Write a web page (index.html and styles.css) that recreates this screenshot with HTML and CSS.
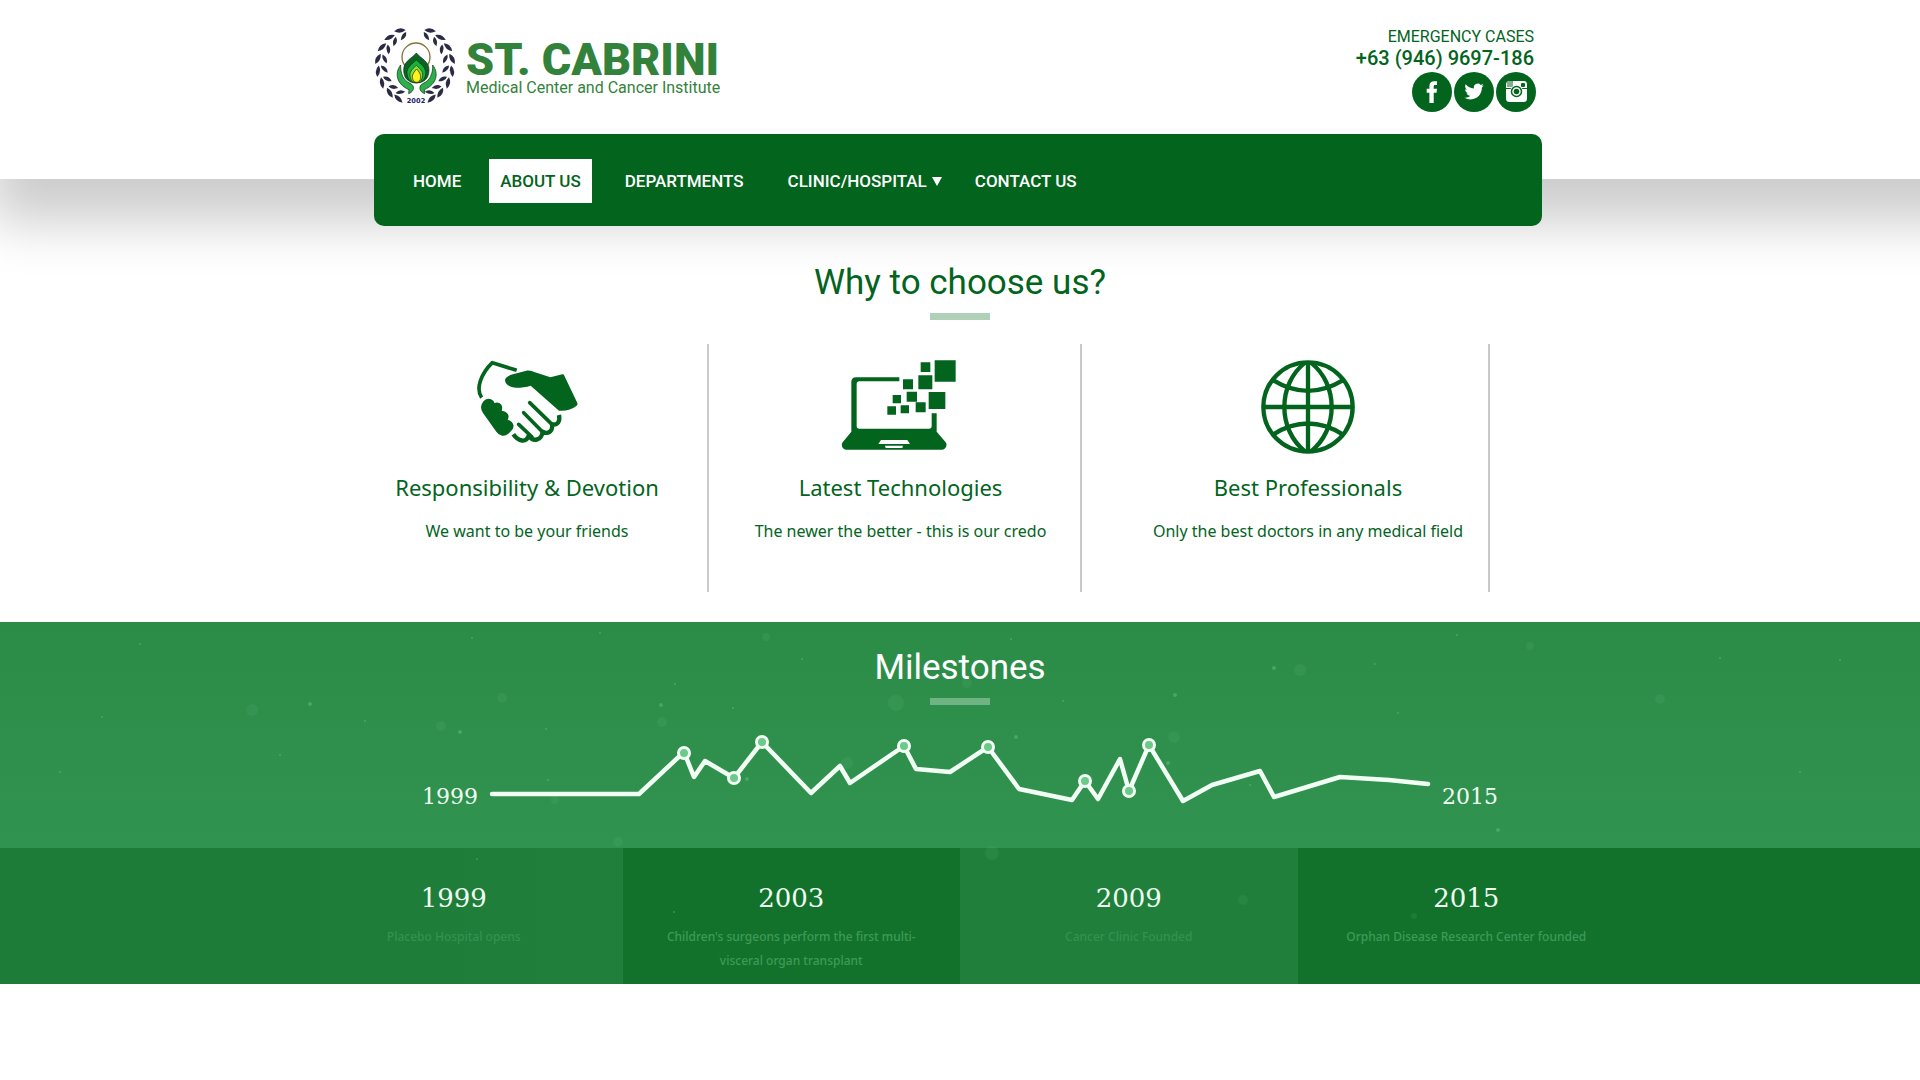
FILE: index.html
```html
<!DOCTYPE html>
<html lang="en">
<head>
<meta charset="utf-8">
<meta name="viewport" content="width=device-width, initial-scale=1">
<title>St. Cabrini Medical Center and Cancer Institute</title>
<link rel="stylesheet" href="styles.css">
</head>
<body>
<header class="site-header">
  <div class="header-inner">
    <a class="brand" href="#">
      <svg class="brand-emblem" viewBox="42 47 246 234" aria-hidden="true">
        <defs>
          <g id="sprig" fill="#2b2b45">
            <path d="M-17 -107 Q-6 -125 16 -118 Q3 -101 -17 -107Z"/>
            <path d="M-16 -101 Q-1 -103 9 -85 Q-10 -82 -16 -101Z"/>
          </g>
          <g id="branch">
            <use href="#sprig" transform="rotate(24)"/>
            <use href="#sprig" transform="rotate(43)"/>
            <use href="#sprig" transform="rotate(62)"/>
            <use href="#sprig" transform="rotate(81)"/>
            <use href="#sprig" transform="rotate(100)"/>
            <use href="#sprig" transform="rotate(119)"/>
            <use href="#sprig" transform="rotate(138)"/>
            <use href="#sprig" transform="rotate(154)"/>
          </g>
          <path id="hand" d="M122 164 C103 188 109 222 147 238 L146 250 C163 244 166 226 150 219 C130 210 121 190 122 164Z"/>
        </defs>
        <use href="#branch" transform="translate(165 164)"/>
        <use href="#branch" transform="translate(165 164) scale(-1 1)"/>
        <circle cx="168" cy="140" r="42" fill="none" stroke="#84733a" stroke-width="4"/>
        <g stroke="#0a2a12" stroke-width="2">
          <use href="#hand" fill="#2cb04c"/>
          <use href="#hand" fill="#2cb04c" transform="translate(340 0) scale(-1 1)"/>
          <path d="M169 128 C182 144 208 153 207 180 C206 206 192 217 169 218 C146 217 132 206 131 180 C130 153 156 144 169 128Z" fill="#0c6424"/>
          <path d="M169 149 C180 160 199 170 197 190 C195 210 184 217 169 217 C154 217 143 210 141 190 C139 170 158 160 169 149Z" fill="#16b43c"/>
          <path d="M169 165 C177 173 190 182 188 196 C186 211 180 217 169 217 C158 217 152 211 150 196 C148 182 161 173 169 165Z" fill="#92dc32"/>
          <path d="M170 176 C177 184 183 192 182 201 C181 211 177 216 170 216 C163 216 158 211 157 201 C156 192 163 184 170 176Z" fill="#fff01e"/>
        </g>
        <text x="168" y="277" text-anchor="middle" class="emblem-year">2002</text>
      </svg>
      <span class="brand-text">
        <span class="brand-name">ST. CABRINI</span>
        <span class="brand-tag">Medical Center and Cancer Institute</span>
      </span>
    </a>
    <div class="contact">
      <span class="contact-label">EMERGENCY CASES</span>
      <a class="contact-phone" href="tel:+639469697186">+63 (946) 9697-186</a>
      <div class="social">
        <a href="#" aria-label="Facebook"><svg viewBox="0 0 40 40"><path d="M17.400 31V20.800H14.700V16.800H17.400V14.200C17.400 10.800 19.200 9.200 22.200 9.200H25V13.100H23.200C22.200 13.100 21.700 13.500 21.700 14.600V16.800H25L24.500 20.800H21.700V31Z" fill="#fff"/></svg></a>
        <a href="#" aria-label="Twitter"><svg viewBox="0 0 40 40"><path transform="translate(10.400 9.800) scale(.81)" fill="#fff" d="M23.950 4.570a10 10 0 0 1-2.820.780 4.960 4.960 0 0 0 2.160-2.720c-.950.550-2 .950-3.130 1.180a4.920 4.920 0 0 0-8.380 4.480C7.690 8.090 4.070 6.130 1.640 3.160a4.820 4.820 0 0 0-.670 2.480c0 1.710.870 3.210 2.190 4.100a4.900 4.900 0 0 1-2.230-.620v.060a4.920 4.920 0 0 0 3.950 4.830 5 5 0 0 1-2.210.080 4.940 4.940 0 0 0 4.600 3.420A9.870 9.870 0 0 1 0 19.540a14 14 0 0 0 7.550 2.210c9.050 0 14-7.500 14-13.980 0-.210 0-.420-.020-.630a9.940 9.940 0 0 0 2.460-2.550z"/></svg></a>
        <a href="#" aria-label="Instagram"><svg viewBox="0 0 40 40"><rect x="10" y="9" width="21" height="21" rx="3.500" fill="#fff"/><path d="M12 9.500V15M14 9V15M16 9V15" stroke="#03641d" stroke-width="1"/><rect x="25" y="11" width="4" height="4" rx="1" fill="#03641d"/><path d="M10 16.500H15M26 16.500H31" stroke="#03641d"/><circle cx="20.500" cy="19.500" r="6.500" fill="#fff"/><circle cx="20.500" cy="19.500" r="5" fill="none" stroke="#03641d" stroke-width="1.500"/><circle cx="20.500" cy="19.500" r="2.800" fill="#03641d"/></svg></a>
      </div>
    </div>
  </div>
</header>

<div class="nav-bar">
  <nav class="main-nav" aria-label="Main">
    <ul>
      <li><a class="nav-link nav-link--first" href="#">HOME</a></li>
      <li><a class="nav-link nav-link--active" href="#" aria-current="page">ABOUT US</a></li>
      <li><a class="nav-link" href="#">DEPARTMENTS</a></li>
      <li><a class="nav-link nav-link--menu" href="#">CLINIC/HOSPITAL<svg class="caret" viewBox="0 0 10 10" aria-hidden="true"><path d="M0 1H10L5 10Z" fill="#fff"/></svg></a></li>
      <li><a class="nav-link" href="#">CONTACT US</a></li>
    </ul>
  </nav>
</div>

<main>
  <section class="why">
    <h2 class="section-title">Why to choose us?</h2>
    <div class="features">
      <article class="feature">
        <div class="feature-icon">
          <svg class="icon-hands" viewBox="289 91 306 252" aria-hidden="true" fill="#03641d">
            <path d="M306 204 C287 177 304 132 338 99 L411 122" fill="none" stroke="#03641d" stroke-width="11" stroke-linejoin="round"/>
            <path d="M376 151 C378 143 388 137 400 134 L440 123 C450 121 458 124 466 128 L512 143 L548 134 Q552 133 554 138 L593 220 Q595 225 590 229 Q570 245 538 243 L453 168 C440 172 425 174 410 174 C392 174 376 164 376 151Z"/>
            <path d="M304 232 Q304 224 312 214 Q326 200 342 214 Q342 219 345 220 Q356 215 364 224 Q370 233 366 243 Q380 244 386 256 Q388 264 384 270 Q399 275 402 288 Q402 298 392 306 Q378 323 364 317 Q356 314 350 306 L310 250 Q304 242 304 232Z"/>
            <g fill="none" stroke="#03641d" stroke-width="11" stroke-linecap="round">
              <path d="M450 219 L517 284"/><path d="M432 249 L488 306"/><path d="M417 284 L457 322"/>
            </g>
            <path d="M401 314 C416 336 440 340 447 318 C462 340 486 330 489 306 C504 315 520 306 517 284 C534 287 542 275 538 256" fill="none" stroke="#03641d" stroke-width="13" stroke-linejoin="round"/>
          </svg>
        </div>
        <h3>Responsibility &amp; Devotion</h3>
        <p>We want to be your friends</p>
      </article>
      <article class="feature">
        <div class="feature-icon">
          <svg class="icon-laptop" viewBox="361 86 348 270" aria-hidden="true" fill="#03641d">
            <path d="M536 138 V150 H416 Q408 150 408 158 V284 Q408 292 416 292 H625 Q633 292 633 284 V246 H648 V301 L675 333 Q680 339 677 345 L674 350 Q671 355 664 355 H377 Q370 355 366 349 L364 345 Q361 339 366 333 L392 301 V152 Q392 138 406 138Z"/>
            <path d="M481 326 H560 L568 338 H473ZM493 343 H547 L545 350 H495Z" fill="#fff"/>
            <path d="M600 93H629V122H600ZM642 87H705V151H642ZM547 144H577V174H547ZM593 132H635V174H593ZM558 181H589V211H558ZM516 191H541V216H516ZM624 182H674V233H624ZM500 225H526V250H500ZM540 222H565V246H540ZM585 213H615V243H585Z"/>
          </svg>
        </div>
        <h3>Latest Technologies</h3>
        <p>The newer the better - this is our credo</p>
      </article>
      <article class="feature">
        <div class="feature-icon">
          <svg class="icon-globe" viewBox="423 92 282 282" aria-hidden="true" fill="none" stroke="#03641d" stroke-width="13">
            <circle cx="564" cy="233" r="134"/>
            <path d="M564 99V367M430 233H698"/>
            <path d="M556 99C472 165 472 301 556 367M572 99C656 165 656 301 572 367"/>
            <path d="M460 153Q564 216 668 153M460 315Q564 250 668 315"/>
          </svg>
        </div>
        <h3>Best Professionals</h3>
        <p>Only the best doctors in any medical field</p>
      </article>
    </div>
  </section>

  <section class="milestones">
    <svg class="specks" viewBox="0 0 1920 362" preserveAspectRatio="xMidYMin slice" aria-hidden="true" fill="#6fbf83">
      <g opacity=".12">
        <circle cx="252" cy="88" r="6"/><circle cx="502" cy="76" r="5"/><circle cx="662" cy="100" r="5"/><circle cx="441" cy="104" r="5"/><circle cx="847" cy="141" r="6"/><circle cx="896" cy="81" r="8"/><circle cx="967" cy="61" r="5"/><circle cx="1300" cy="48" r="6"/><circle cx="1174" cy="115" r="6"/><circle cx="1530" cy="24" r="4"/><circle cx="1660" cy="77" r="5"/><circle cx="618" cy="220" r="5"/><circle cx="992" cy="231" r="7"/><circle cx="555" cy="178" r="4"/><circle cx="766" cy="15" r="4"/><circle cx="1243" cy="278" r="5"/><circle cx="1414" cy="294" r="3"/>
      </g>
      <g opacity=".45">
        <circle cx="472" cy="16" r="1"/><circle cx="600" cy="11" r="1"/><circle cx="802" cy="37" r="1"/><circle cx="675" cy="62" r="1"/><circle cx="661" cy="83" r="2"/><circle cx="733" cy="86" r="1"/><circle cx="460" cy="110" r="2"/><circle cx="546" cy="107" r="1"/><circle cx="548" cy="158" r="1"/><circle cx="747" cy="157" r="2"/><circle cx="1011" cy="17" r="1"/><circle cx="1063" cy="79" r="1"/><circle cx="1175" cy="73" r="2"/><circle cx="1274" cy="46" r="2"/><circle cx="1375" cy="42" r="1"/><circle cx="1398" cy="91" r="1"/><circle cx="1457" cy="13" r="1"/><circle cx="1016" cy="115" r="2"/><circle cx="1168" cy="141" r="2"/><circle cx="1498" cy="208" r="2"/><circle cx="1250" cy="163" r="1"/><circle cx="1720" cy="36" r="1"/><circle cx="1840" cy="38" r="1"/><circle cx="102" cy="95" r="1"/><circle cx="140" cy="22" r="1"/><circle cx="280" cy="133" r="1"/><circle cx="365" cy="99" r="1"/><circle cx="60" cy="150" r="1"/><circle cx="310" cy="82" r="2"/><circle cx="1800" cy="150" r="1"/><circle cx="477" cy="237" r="1"/><circle cx="674" cy="290" r="1"/>
      </g>
    </svg>
    <h2 class="section-title section-title--light">Milestones</h2>
    <div class="timeline">
      <span class="timeline-year">1999</span>
      <svg class="timeline-chart" viewBox="488 729 944 84" role="img" aria-label="Milestones from 1999 to 2015">
        <polyline points="492,794 639,794 684,752 694,777 705,761 734,778 762,742 811,793 840,766 850,783 904,746 916,769 950,772 988,747 1019,789 1072,800 1085,781 1098,799 1120,759 1129,791 1149,745 1183,801 1212,785 1260,771 1274,797 1340,777 1389,780 1428,784" fill="none" stroke="#f2fff5" stroke-width="4.500" stroke-linejoin="round" stroke-linecap="round"/>
        <g fill="#6dc98a" stroke="#f2fff5" stroke-width="3">
          <circle cx="684" cy="753" r="5.500"/><circle cx="734" cy="778" r="5.500"/><circle cx="762" cy="742" r="5.500"/><circle cx="904" cy="746" r="5.500"/><circle cx="988" cy="747" r="5.500"/><circle cx="1085" cy="781" r="5.500"/><circle cx="1129" cy="791" r="5.500"/><circle cx="1149" cy="745" r="5.500"/>
        </g>
      </svg>
      <span class="timeline-year timeline-year--end">2015</span>
    </div>
    <div class="years-band">
      <ol class="years">
        <li><h3>1999</h3><p>Placebo Hospital opens</p></li>
        <li><h3>2003</h3><p>Children's surgeons perform the first multi-visceral organ transplant</p></li>
        <li><h3>2009</h3><p>Cancer Clinic Founded</p></li>
        <li><h3>2015</h3><p>Orphan Disease Research Center founded</p></li>
      </ol>
    </div>
  </section>
</main>
</body>
</html>
```
FILE: styles.css
```css
:root {
  --green: #03641d;
  --brand: #33823c;
  --sans: Roboto, "Liberation Sans", sans-serif;
  --text: "Noto Sans", "Open Sans", sans-serif;
  --numerals: "DejaVu Serif", "Liberation Serif", serif;
}

* { box-sizing: border-box; }

body {
  margin: 0;
  background: #fff;
  color: var(--green);
  font-family: var(--sans);
}

h2, h3, p, ul, ol { margin: 0; padding: 0; font-weight: 400; }
ul, ol { list-style: none; }
a { color: inherit; text-decoration: none; }
svg { display: block; }

/* Header */
.site-header {
  background: #fff;
  box-shadow: 30px 3px 50px 40px rgba(0, 0, 0, .2);
  padding: 26px 28px 67px 24px;
  clip-path: inset(0 0 -120px 0);
}

.header-inner {
  display: flex;
  justify-content: space-between;
  max-width: 1168px;
  margin: 0 auto;
  padding-right: 6px;
}

.brand { display: flex; gap: 10px; color: var(--brand); }
.brand-emblem { width: 82px; height: 78px; }
.emblem-year { font: 700 20px "DejaVu Sans", sans-serif; fill: #1d1f6b; }
.brand-text { display: flex; flex-direction: column; padding-top: 14px; }
.brand-name { font-size: 45px; line-height: 40px; font-weight: 900; }
.brand-tag { font-size: 16px; line-height: 16px; }

.contact { display: flex; flex-direction: column; align-items: flex-end; }
.contact-label { font-size: 16px; line-height: 22px; padding-right: 2px; }
.contact-phone { font-size: 20px; line-height: 20px; font-weight: 500; padding-right: 2px; }
.social { display: flex; gap: 2px; margin-top: 4px; }
.social a { width: 40px; height: 40px; border-radius: 50%; background: var(--green); }

/* Navigation */
.nav-bar {
  position: relative;
  margin-top: -45px;
  padding: 0 28px 0 24px;
}
.main-nav {
  max-width: 1168px;
  margin: 0 auto;
  padding: 25px 39px 23px;
  border-radius: 10px;
  background: var(--green);
}
.main-nav ul { display: flex; flex-wrap: wrap; gap: 22px; }
.nav-link {
  display: flex;
  align-items: center;
  padding: 12px 11px;
  color: #fff;
  font-size: 17px;
  line-height: 20px;
  font-weight: 500;
}
.nav-link--first { padding-left: 0; padding-right: 6px; }
.nav-link--active { background: #fff; color: var(--green); }
.nav-link--menu { padding-right: 0; }
.caret { width: 10px; height: 10px; margin-left: 5px; }

/* Section headings */
.section-title {
  position: relative;
  text-align: center;
  font-size: 35px;
  line-height: 44px;
}
.section-title::after {
  content: "";
  display: block;
  width: 60px;
  height: 7px;
  margin: 8px auto 0;
  background: #b0d0b7;
}
.section-title--light { color: #fff; }
.section-title--light::after { background: #70b483; }

/* Features */
.why { position: relative; padding: 35px 0 30px; }
.features {
  display: grid;
  grid-template-columns: 362fr 373fr 408fr;
  max-width: 1226px;
  margin: 24px auto 0;
  padding-right: 83px;
}
.feature {
  padding: 16px 0 49px;
  border-right: 2px solid #c9c9cb;
  text-align: center;
}
.feature:nth-child(2) { padding-left: 12px; }
.feature:nth-child(3) { padding-left: 46px; }
.feature-icon { display: flex; justify-content: center; height: 96px; }
.icon-hands { width: 102px; height: 84px; }
.icon-laptop { width: 116px; height: 90px; margin-right: 4px; }
.icon-globe { width: 94px; height: 94px; }
.feature h3 { margin-top: 15px; font: 22px/32px var(--text); }
.feature p { margin-top: 16px; font: 16px/24px var(--text); }

/* Milestones */
.milestones {
  position: relative;
  padding-top: 24px;
  background: linear-gradient(#2b8c47, #319350 224px);
}
.specks { position: absolute; inset: 0; width: 100%; height: 100%; }
.timeline {
  position: relative;
  display: flex;
  align-items: flex-end;
  max-width: 1076px;
  margin: 24px auto 35px;
}
.timeline-year {
  flex: 0 0 66px;
  color: #effff2;
  font: 22px/32px var(--numerals);
}
.timeline-year--end { text-align: right; }
.timeline-chart { flex: 1; min-width: 0; }

.years-band { background: linear-gradient(90deg, #1d7c38 50%, #12722c 50%); }
.years {
  display: grid;
  grid-template-columns: repeat(4, 1fr);
  max-width: 1350px;
  margin: 0 auto;
}
.years li {
  padding: 30px 32px 11px;
  text-align: center;
  background: #1f7f3b;
}
.years li:first-child { background: linear-gradient(90deg, #1d7c38, #1f7f3b); }
.years li:nth-child(even) { background: #12722c; }
.years h3 { color: #effff2; font: 26px/40px var(--numerals); }
.years p { margin-top: 7px; min-height: 48px; color: #36914f; font: 500 12px/24px var(--text); }
.years li:nth-child(even) p { color: #3f9a58; }
```
